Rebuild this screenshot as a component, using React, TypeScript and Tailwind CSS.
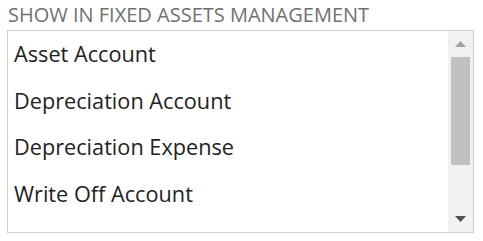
const items = [
  "Asset Account",
  "Depreciation Account",
  "Depreciation Expense",
  "Write Off Account",
  "Gain/Loss Account",
];

export default function App() {
  return (
    <div className="w-[483px] h-[241px] bg-white pl-[7px] pt-[4px] font-['Open_Sans',sans-serif]">
      <div className="pl-[1px] text-[20px] leading-[22px] text-[#707070] uppercase whitespace-nowrap">
        Show in Fixed Assets Management
      </div>
      <div className="mt-[4px] w-[467px] h-[203px] border border-[#d0d0d0] flex">
        <div className="flex-1 overflow-hidden pl-[6px] pt-[9px]">
          {items.map((item) => (
            <div key={item} className="h-[46.5px] text-[21.7px] leading-[27px] text-[#222] whitespace-nowrap">
              {item}
            </div>
          ))}
        </div>
        <div className="w-[25px] bg-[#f1f1f1] flex flex-col items-center">
          <div className="h-[26px] flex items-center justify-center">
            <svg width="11" height="6" viewBox="0 0 11 6">
              <path d="M0 6 L5.5 0 L11 6 Z" fill="#a3a3a3" />
            </svg>
          </div>
          <div className="w-[19px] h-[108px] bg-[#c1c1c1]" />
          <div className="flex-1" />
          <div className="h-[26px] flex items-center justify-center">
            <svg width="11" height="6" viewBox="0 0 11 6">
              <path d="M0 0 L11 0 L5.5 6 Z" fill="#505050" />
            </svg>
          </div>
        </div>
      </div>
    </div>
  );
}
